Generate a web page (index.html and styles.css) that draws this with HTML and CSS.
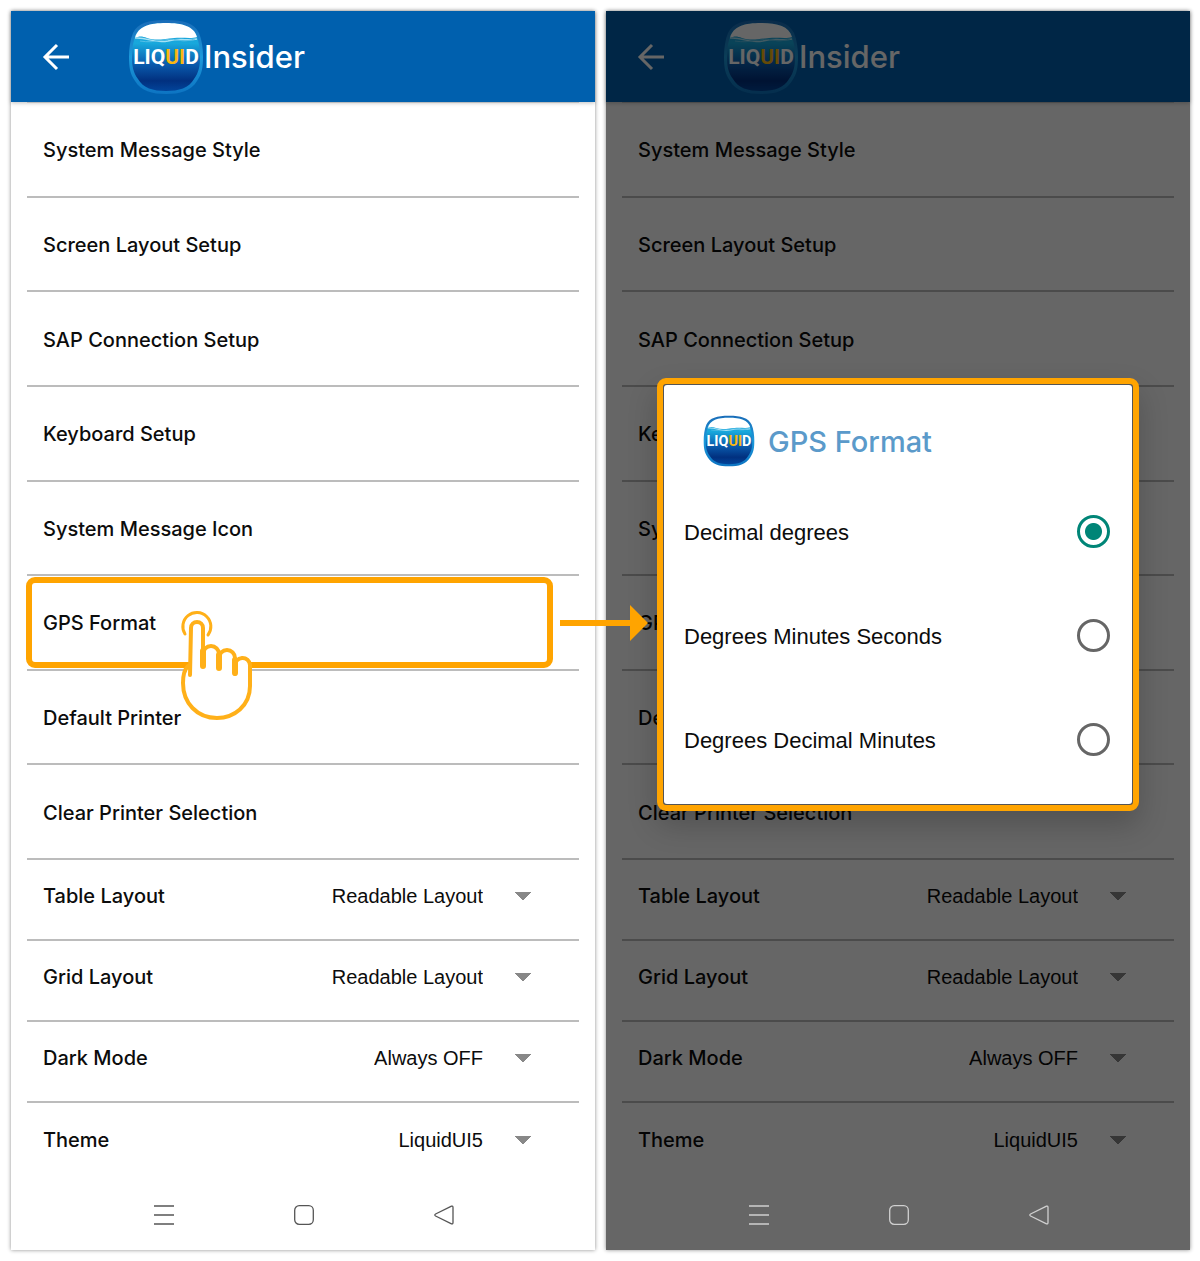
FILE: index.html
```html
<!DOCTYPE html>
<html lang="en">
  <head>
    <meta charset="UTF-8" />
    <meta name="viewport" content="width=device-width, initial-scale=1.0" />
    <title>Liquid Insider | GPS Format</title>
    <link rel="stylesheet" href="styles.css">
  </head>

  <body>
    <!-- Shared icons -->
    <svg class="sprite" aria-hidden="true">
      <defs>
        <linearGradient id="water" x1="0" y1="0" x2="0" y2="1">
          <stop offset="0" stop-color="#1f9fd8" />
          <stop offset="0.3" stop-color="#18a8dc" />
          <stop offset="0.6" stop-color="#0a5cae" />
          <stop offset="0.85" stop-color="#01307f" />
          <stop offset="1" stop-color="#02449a" />
        </linearGradient>
        <linearGradient id="rim" x1="0" y1="0" x2="0" y2="1">
          <stop offset="0" stop-color="#1a6cb8" />
          <stop offset="0.5" stop-color="#1c9adb" />
          <stop offset="1" stop-color="#0d74c2" />
        </linearGradient>
        <symbol id="logo" viewBox="0 0 76 76">
          <path d="M38 1C56 1 66 4 71 14C74 21 75 30 75 38C75 48 74 55 69 62C63 72 52 75 38 75C24 75 13 72 7 62C2 55 1 48 1 38C1 30 2 21 5 14C10 4 20 1 38 1Z" fill="url(#rim)" />
          <path d="M38 4C54 4 63 7 68 15C71 22 72 30 72 38C72 47 71 53 66 60C61 69 51 72 38 72C25 72 15 69 10 60C5 53 4 47 4 38C4 30 5 22 8 15C13 7 22 4 38 4Z" fill="url(#water)" />
          <path d="M38 4C54 4 66 7 69 18C63 20 55 18 46 19C36 20 28 22 19 19C14 17 11 17 7 19C10 7 22 4 38 4Z" fill="#fff" />
          <path d="M7 19C20 18 26 25 40 22C52 19 60 22 69 20" fill="none" stroke="#a5e1f4" stroke-width="1.5" />
          <path d="M12 22C28 25 38 18 50 21C57 23 62 21 67 20" fill="none" stroke="#56bfe6" stroke-width="1" />
          <text class="logo-text" x="38" y="45" text-anchor="middle">LIQ<tspan fill="#fbb812">UI</tspan>D</text>
        </symbol>
        <symbol id="back" viewBox="0 0 28 28">
          <path d="M27 14H3M15 2L3 14L15 26" fill="none" stroke="currentColor" stroke-width="3" />
        </symbol>
        <symbol id="nav-menu" viewBox="0 0 22 22">
          <path d="M1 2H21M1 11H21M1 20H21" fill="none" stroke="currentColor" stroke-width="1.5" />
        </symbol>
        <symbol id="nav-home" viewBox="0 0 22 22">
          <rect x="1.7" y="1.7" width="18.6" height="18.6" rx="4.5" fill="none" stroke="currentColor" stroke-width="1.3" />
        </symbol>
        <symbol id="nav-back" viewBox="0 0 22 22">
          <path d="M18.5 2.2L2.6 10Q1 11 2.6 12L18.5 19.8Q20 20.4 20 18.5V3.5Q20 1.6 18.5 2.2Z" fill="none" stroke="currentColor" stroke-width="1.3" />
        </symbol>
      </defs>
    </svg>

    <main class="screens">
      <section class="screen">
        <header class="topbar">
          <button type="button" class="icon-btn" aria-label="Back"><svg class="back-icon"><use href="#back" /></svg></button>
          <svg class="logo"><use href="#logo" /></svg>
          <h1>Insider</h1>
        </header>

        <ul class="menu">
          <li><a href="#">System Message Style</a></li>
          <li><a href="#">Screen Layout Setup</a></li>
          <li><a href="#">SAP Connection Setup</a></li>
          <li><a href="#">Keyboard Setup</a></li>
          <li><a href="#">System Message Icon</a></li>
          <li class="selected">
            <a href="#">GPS Format</a>
            <span class="highlight"></span>
            <svg class="hand" viewBox="0 0 72 112">
              <path d="M11 102C2 93 1 82 1 74C1 65 4 58 9 55L10 16Q16 8 22 16V38Q30 33 38 42Q47 37 54 46Q62 42 69 50V76C69 99 53 108 36 108C26 108 17 107 11 102Z" fill="#fff" stroke="none" />
              <path d="M4 24A14 14 0 1 1 27 25" stroke-width="3" />
              <path d="M9 65L10 18A6 6 0 0 1 22 18V56V44A8 8 0 0 1 38 44V58V48A8 8 0 0 1 54 48V64V56A7 7 0 0 1 69 55V76C69 96 53 108 36 108C16 108 2 93 2 73C2 65 4 59 7 56" stroke-width="4" />
              <path d="M22 41V56M38 45V58M54 50V63" stroke-width="6" />
            </svg>
            <svg class="arrow" viewBox="0 0 88 36">
              <path d="M0 15H70V0L88 18L70 36V21H0Z" fill="#ffa400" />
            </svg>
          </li>
          <li><a href="#">Default Printer</a></li>
          <li><a href="#">Clear Printer Selection</a></li>
        </ul>

        <form class="settings">
          <div class="setting">
            <label for="tableLayout">Table Layout</label>
            <select id="tableLayout"><option>Readable Layout</option></select>
          </div>
          <div class="setting">
            <label for="gridLayout">Grid Layout</label>
            <select id="gridLayout"><option>Readable Layout</option></select>
          </div>
          <div class="setting">
            <label for="darkMode">Dark Mode</label>
            <select id="darkMode"><option>Always OFF</option></select>
          </div>
          <div class="setting">
            <label for="theme">Theme</label>
            <select id="theme"><option>LiquidUI5</option></select>
          </div>
        </form>

        <nav class="navbar">
          <button type="button" class="icon-btn" aria-label="Recent apps"><svg><use href="#nav-menu" /></svg></button>
          <button type="button" class="icon-btn" aria-label="Home"><svg><use href="#nav-home" /></svg></button>
          <button type="button" class="icon-btn" aria-label="Go back"><svg><use href="#nav-back" /></svg></button>
        </nav>
      </section>

      <section class="screen">
        <header class="topbar">
          <button type="button" class="icon-btn" aria-label="Back"><svg class="back-icon"><use href="#back" /></svg></button>
          <svg class="logo"><use href="#logo" /></svg>
          <h1>Insider</h1>
        </header>

        <ul class="menu">
          <li><a href="#">System Message Style</a></li>
          <li><a href="#">Screen Layout Setup</a></li>
          <li><a href="#">SAP Connection Setup</a></li>
          <li><a href="#">Keyboard Setup</a></li>
          <li><a href="#">System Message Icon</a></li>
          <li><a href="#">GPS Format</a></li>
          <li><a href="#">Default Printer</a></li>
          <li><a href="#">Clear Printer Selection</a></li>
        </ul>

        <form class="settings">
          <div class="setting">
            <label for="tableLayout2">Table Layout</label>
            <select id="tableLayout2"><option>Readable Layout</option></select>
          </div>
          <div class="setting">
            <label for="gridLayout2">Grid Layout</label>
            <select id="gridLayout2"><option>Readable Layout</option></select>
          </div>
          <div class="setting">
            <label for="darkMode2">Dark Mode</label>
            <select id="darkMode2"><option>Always OFF</option></select>
          </div>
          <div class="setting">
            <label for="theme2">Theme</label>
            <select id="theme2"><option>LiquidUI5</option></select>
          </div>
        </form>

        <nav class="navbar navbar-light">
          <button type="button" class="icon-btn" aria-label="Recent apps"><svg><use href="#nav-menu" /></svg></button>
          <button type="button" class="icon-btn" aria-label="Home"><svg><use href="#nav-home" /></svg></button>
          <button type="button" class="icon-btn" aria-label="Go back"><svg><use href="#nav-back" /></svg></button>
        </nav>

        <div class="overlay">
          <div class="dialog" role="dialog" aria-labelledby="dialogTitle">
            <form class="dialog-body">
              <div class="dialog-header">
                <svg><use href="#logo" /></svg>
                <h2 id="dialogTitle">GPS Format</h2>
              </div>
              <div class="option">
                <label for="decimalDegrees">Decimal degrees</label>
                <input type="radio" id="decimalDegrees" name="gpsFormat" checked />
              </div>
              <div class="option">
                <label for="degMinSec">Degrees Minutes Seconds</label>
                <input type="radio" id="degMinSec" name="gpsFormat" />
              </div>
              <div class="option">
                <label for="degDecMin">Degrees Decimal Minutes</label>
                <input type="radio" id="degDecMin" name="gpsFormat" />
              </div>
            </form>
          </div>
        </div>
      </section>
    </main>
  </body>
</html>
```

FILE: styles.css
```css
:root {
  --bar-color: #0060ae;
  --accent-color: #ffa400;
  --radio-color: #008577;
  --line-color: #bcbcbc;
}

* {
  box-sizing: border-box;
  margin: 0;
  padding: 0;
}

body {
  background-color: #fff;
  color: #0c0c0c;
  font-family: Inter, "Liberation Sans", sans-serif;
  font-size: 20px;
  padding: 11px 10px 11px 11px;
}

.sprite {
  position: absolute;
  width: 0;
  height: 0;
}

.screens {
  display: grid;
  grid-template-columns: 1fr 1fr;
  gap: 11px;
}

.screen {
  position: relative;
  background: #fff;
  box-shadow: 0 0 4px rgba(0, 0, 0, 0.45);
}

.icon-btn {
  display: flex;
  border: none;
  background: none;
  color: inherit;
  cursor: pointer;
}

/* Header */
.topbar {
  display: flex;
  align-items: center;
  height: 91px;
  padding-left: 31px;
  background: var(--bar-color);
  color: #fff;
  box-shadow: 0 1px 4px rgba(0, 0, 0, 0.25);
}

.back-icon {
  width: 28px;
  height: 28px;
}

.logo {
  width: 76px;
  height: 76px;
  margin-left: 58px;
}

.logo-text {
  font-family: Roboto, sans-serif;
  font-size: 21px;
  font-weight: 700;
  fill: #fff;
}

h1 {
  font-size: 31px;
  font-weight: 500;
}

/* Menu rows */
.menu {
  display: grid;
  grid-auto-rows: 1fr;
  min-height: 758px;
  margin: 0 16px;
  list-style: none;
  border-top: 1px solid var(--line-color);
}

.menu li {
  position: relative;
  display: flex;
  border-bottom: 2px solid var(--line-color);
}

.menu a {
  display: flex;
  flex: 1;
  align-items: center;
  padding: 2px 16px 0;
  color: inherit;
  font-weight: 500;
  text-decoration: none;
}

.selected {
  z-index: 2;
}

.highlight {
  position: absolute;
  inset: 1px 26px 1px -1px;
  border: 6px solid var(--accent-color);
  border-radius: 9px;
  pointer-events: none;
}

.hand {
  position: absolute;
  top: 34px;
  left: 154px;
  width: 72px;
  height: 112px;
  overflow: visible;
  fill: none;
  stroke: #ffb019;
  stroke-linecap: round;
  stroke-linejoin: round;
}

.arrow {
  position: absolute;
  top: 29px;
  left: 533px;
  width: 88px;
  height: 36px;
}

/* Drop-down rows */
.settings {
  margin: 0 16px;
}

.setting {
  display: flex;
  align-items: center;
  justify-content: space-between;
  height: 81px;
  padding: 0 48px 8px 16px;
  border-bottom: 2px solid var(--line-color);
}

.setting:last-child {
  border-bottom: none;
}

.setting label {
  font-weight: 500;
}

.setting select {
  appearance: none;
  border: none;
  padding-right: 48px;
  color: inherit;
  font: inherit;
  font-family: "Liberation Sans", sans-serif;
  text-align-last: right;
  background: conic-gradient(from -45deg at 50% 100%, #888 90deg, transparent 0) right center / 16px 8px no-repeat;
}

/* Android buttons */
.navbar {
  display: flex;
  justify-content: center;
  gap: 118px;
  padding: 20px 0 24px 2px;
  color: #555;
}

.navbar svg {
  width: 22px;
  height: 22px;
}

.navbar-light {
  position: relative;
  z-index: 2;
  color: #d0d0d0;
}

/* Dialog */
.overlay {
  position: absolute;
  inset: 0;
  z-index: 1;
  padding: 367px 51px 0;
  background: rgba(0, 0, 0, 0.6);
}

.dialog {
  padding: 1px;
  border: 6px solid var(--accent-color);
  border-radius: 9px;
  background: #555;
  box-shadow: 0 14px 30px rgba(0, 0, 0, 0.2);
}

.dialog-body {
  padding: 0 22px 12px 20px;
  border-radius: 3px;
  background: #fff;
}

.dialog-header {
  display: flex;
  align-items: center;
  gap: 13px;
  height: 95px;
  padding: 17px 0 0 19px;
}

.dialog-header svg {
  width: 52px;
  height: 52px;
}

h2 {
  color: #5b9aca;
  font-size: 29px;
  font-weight: 500;
}

.option {
  display: flex;
  align-items: center;
  justify-content: space-between;
  height: 104px;
  padding-bottom: 2px;
}

.option label {
  padding-top: 4px;
  font-family: "Liberation Sans", sans-serif;
  font-size: 22px;
}

.option input {
  appearance: none;
  width: 33px;
  height: 33px;
  border: 3px solid #666;
  border-radius: 50%;
}

.option input:checked {
  border-color: var(--radio-color);
  background: radial-gradient(circle, var(--radio-color) 8px, #fff 9px);
}
```
